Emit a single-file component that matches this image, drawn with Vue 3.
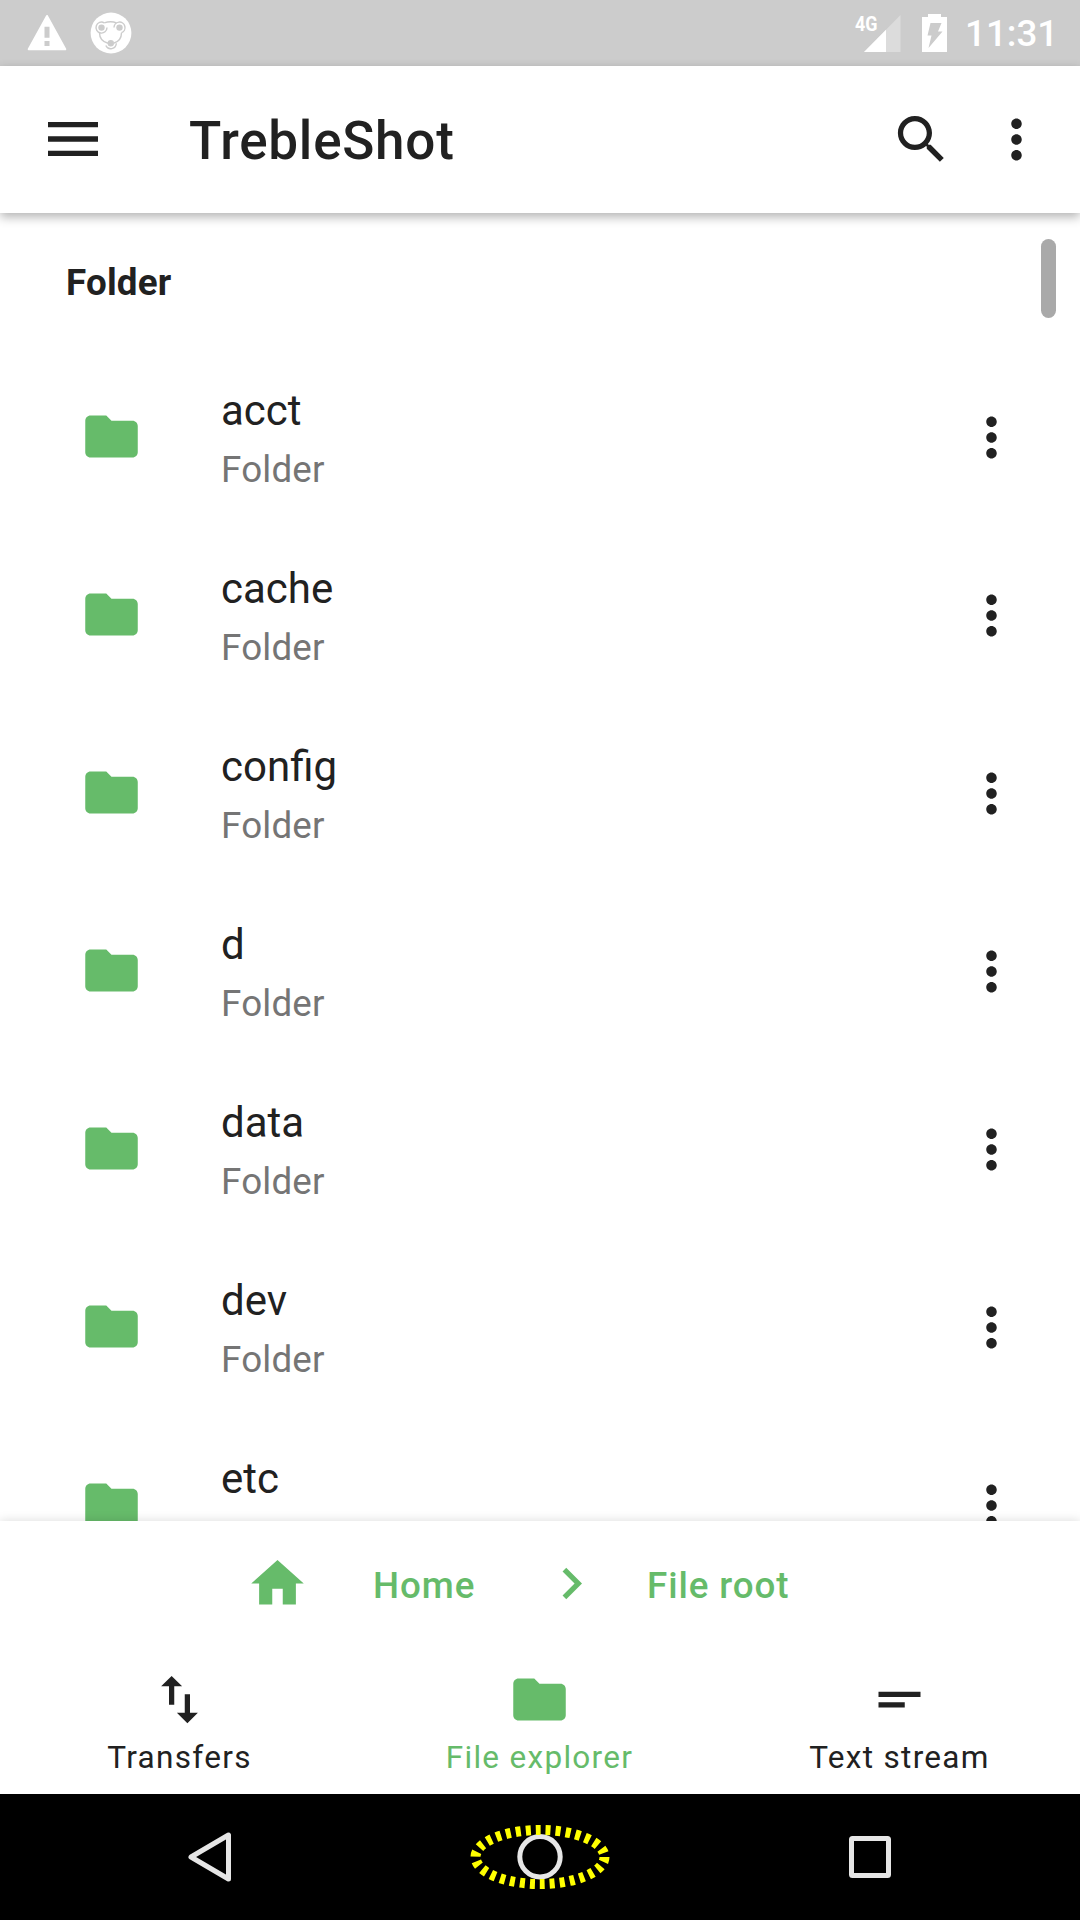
<script setup>
const folders = ['acct', 'cache', 'config', 'd', 'data', 'dev', 'etc']
const folderPath =
  'M10 4H4c-1.1 0-1.99.9-1.99 2L2 18c0 1.1.9 2 2 2h16c1.1 0 2-.9 2-2V8c0-1.1-.9-2-2-2h-8l-2-2z'
const morePath =
  'M12 8c1.1 0 2-.9 2-2s-.9-2-2-2-2 .9-2 2 .9 2 2 2zm0 2c-1.1 0-2 .9-2 2s.9 2 2 2 2-.9 2-2-.9-2-2-2zm0 6c-1.1 0-2 .9-2 2s.9 2 2 2 2-.9 2-2-.9-2-2-2z'
const tabs = [
  {
    label: 'Transfers',
    path: 'M16 17.01V10h-2v7.01h-3L15 21l4-3.99h-3zM9 3L5 6.99h3V14h2V6.99h3L9 3z',
    active: false,
  },
  { label: 'File explorer', path: folderPath, active: true },
  { label: 'Text stream', path: 'M4 9h16v2H4zM4 13h10v2H4z', active: false },
]
</script>

<template>
  <div class="screen">
    <header class="status">
      <svg class="warn" width="40" height="38" viewBox="0 0 40 38">
        <path d="M20 2 L38.3 35.3 H1.7 Z" fill="#fff" stroke="#fff" stroke-width="2" stroke-linejoin="round" />
        <path d="M17.5 12.7h5v11h-5zM17.5 27h5v5h-5z" fill="#ccc" />
      </svg>
      <svg class="app-mark" width="42" height="42" viewBox="0 0 42 42">
        <circle cx="21" cy="21" r="20.4" fill="#fff" />
        <g fill="none" stroke="#ccc" stroke-width="1.4">
          <path d="M14.200 10.800Q21 8.800 26.500 10.800" />
          <path d="M9.500 20.700C9.500 25.800 12 29.600 18 31.200" />
          <path d="M31.500 20.700C31.500 25.800 29.500 29.600 23.500 31.200" />
          <path d="M14.200 10.800A5.500 5.500 0 1 0 17 15.600" />
          <path d="M24 15.600A5.500 5.500 0 1 1 31.500 20.700" />
          <path d="M15.800 33.500A5.500 5.500 0 0 0 26.300 31.300" />
        </g>
        <g fill="#ccc">
          <circle cx="11.500" cy="15.600" r="3.200" />
          <circle cx="29.500" cy="15.600" r="3.200" />
          <circle cx="20.800" cy="31.300" r="3.200" />
        </g>
      </svg>
      <span class="spacer"></span>
      <svg class="signal" width="50" height="44" viewBox="-4 -4 50 44">
        <path d="M9 38L45.500 1V38z" fill="#dcdcdc" />
        <path d="M9 38L31 15.700V38z" fill="#fff" />
        <text x="0" y="17.400" textLength="22.500" lengthAdjust="spacingAndGlyphs">4G</text>
      </svg>
      <svg class="battery" width="25" height="38" viewBox="0 0 25 38">
        <path d="M6 0h13v3h6v35H0V3h6z" fill="#fff" />
        <path d="M8.500 9h11l-3.500 8.500h4.500L6.500 34l3-12.500H5.500z" fill="#ccc" />
      </svg>
      <span class="clock">11:31</span>
    </header>

    <div class="toolbar">
      <svg class="menu" width="50" height="34" viewBox="0 0 50 34">
        <path d="M0 0h50v5.300H0zM0 14.350h50v5.300H0zM0 28.700h50v5.300H0z" />
      </svg>
      <h1>TrebleShot</h1>
      <svg class="icon" viewBox="0 0 24 24">
        <path d="M15.500 14h-.79l-.28-.27C15.410 12.590 16 11.110 16 9.500 16 5.910 13.090 3 9.500 3S3 5.910 3 9.500 5.910 16 9.500 16c1.610 0 3.090-.59 4.230-1.570l.27.28v.79l5 4.990L20.490 19l-4.990-5zm-6 0C7.010 14 5 11.990 5 9.500S7.010 5 9.500 5 14 7.010 14 9.500 11.990 14 9.500 14z" />
      </svg>
      <svg class="icon overflow" viewBox="0 0 24 24"><path :d="morePath" /></svg>
    </div>

    <main class="list">
      <h2>Folder</h2>
      <div v-for="(name, i) in folders" :key="name" class="row">
        <svg class="icon green" viewBox="0 0 24 24"><path :d="folderPath" /></svg>
        <div class="texts">
          <div class="name">{{ name }}</div>
          <div v-if="i < folders.length - 1" class="sub">Folder</div>
        </div>
        <svg class="icon row-more" viewBox="0 0 24 24"><path :d="morePath" /></svg>
      </div>
      <div class="scrollbar"></div>
    </main>

    <section class="panel">
      <div class="crumbs">
        <svg class="icon green" viewBox="0 0 24 24"><path d="M10 20v-6h4v6h5v-8h3L12 3 2 12h3v8z" /></svg>
        <span class="crumb home">Home</span>
        <svg class="icon green" viewBox="0 0 24 24"><path d="M10 6L8.590 7.410 13.170 12l-4.580 4.590L10 18l6-6z" /></svg>
        <span class="crumb root">File root</span>
      </div>
      <nav class="tabs">
        <div v-for="tab in tabs" :key="tab.label" class="tab" :class="{ green: tab.active }">
          <svg class="icon" viewBox="0 0 24 24"><path :d="tab.path" /></svg>
          <span>{{ tab.label }}</span>
        </div>
      </nav>
    </section>

    <footer class="navbar">
      <svg width="1080" height="126" viewBox="0 0 1080 126" fill="none" stroke="#e6e6e6" stroke-width="5" stroke-linejoin="round">
        <path d="M191 63L228.500 41V85z" />
        <circle cx="540" cy="62.700" r="20.200" />
        <rect x="851.500" y="44.500" width="37" height="37" rx="1" />
        <ellipse cx="540" cy="63" rx="64.500" ry="27" stroke="#ff0" stroke-width="10" stroke-dasharray="5 5" />
      </svg>
    </footer>
  </div>
</template>

<style>
body {
  margin: 0;
  background: #fff;
}
</style>

<style scoped>
.screen {
  width: 1080px;
  height: 1920px;
  display: flex;
  flex-direction: column;
  overflow: hidden;
  background: #fff;
  color: #212121;
  font-family: Roboto, "Liberation Sans", sans-serif;
}
svg {
  display: block;
  flex: none;
}
.icon {
  width: 63px;
  height: 63px;
  fill: currentColor;
}
.green {
  color: #66bb6a;
}
.status {
  height: 66px;
  flex: none;
  display: flex;
  align-items: flex-start;
  background: #ccc;
  color: #fff;
}
.warn {
  margin: 14px 0 0 27px;
}
.app-mark {
  margin: 12.400px 0 0 22.500px;
}
.spacer {
  flex: 1;
}
.signal {
  margin: 9.500px 21.500px 0 0;
  overflow: visible;
}
.signal text {
  fill: #fff;
  font: 700 20.500px Roboto, sans-serif;
}
.battery {
  margin-top: 14px;
}
.clock {
  width: 115px;
  margin-left: 18px;
  line-height: 68px;
  font-size: 36.750px;
  font-weight: 500;
}
.toolbar {
  position: relative;
  z-index: 2;
  height: 147px;
  flex: none;
  display: flex;
  align-items: center;
  background: #fff;
  box-shadow: 0 4px 10px rgba(0, 0, 0, 0.3);
}
.menu {
  margin: 0 0 1.500px 48px;
  fill: #212121;
}
h1 {
  flex: 1;
  margin: 3px 0 0 91px;
  font-size: 53px;
  font-weight: 500;
  line-height: 62px;
  letter-spacing: 0.750px;
}
.overflow {
  margin: 0 32px;
}
.list {
  position: relative;
  height: 1308px;
  flex: none;
  overflow: hidden;
}
h2 {
  height: 134px;
  margin: 0 0 0 66px;
  font-size: 36.750px;
  font-weight: 700;
  line-height: 139px;
  letter-spacing: 0.200px;
}
.row {
  height: 178px;
  box-sizing: border-box;
  padding: 0 57px 0 80px;
  display: flex;
  align-items: center;
}
.texts {
  flex: 1;
  height: 118px;
  margin: 9px 0 0 78px;
}
.name {
  font-size: 42px;
  line-height: 58px;
}
.sub {
  font-size: 36.750px;
  line-height: 60px;
  letter-spacing: 0.200px;
  color: #757575;
}
.row-more {
  margin-top: 3px;
}
.scrollbar {
  position: absolute;
  top: 26px;
  right: 24px;
  width: 15px;
  height: 79px;
  border-radius: 7.500px;
  background: #a9a9a9;
}
.panel {
  position: relative;
  z-index: 2;
  height: 273px;
  flex: none;
  background: #fff;
  box-shadow: 0 0 10px rgba(0, 0, 0, 0.15);
}
.crumbs {
  height: 125px;
  display: flex;
  align-items: center;
  padding-left: 246px;
}
.crumb {
  padding-top: 4px;
  font-size: 36.750px;
  font-weight: 500;
  line-height: 44px;
  letter-spacing: 0.900px;
  color: #66bb6a;
}
.home {
  width: 167px;
  margin-left: 64px;
}
.root {
  margin-left: 44px;
}
.tabs {
  height: 148px;
  display: flex;
}
.tab {
  flex: 1;
  display: flex;
  flex-direction: column;
  align-items: center;
  padding: 21.500px 1px 0 0;
}
.tab .icon {
  margin-right: 1px;
}
.tab span {
  margin-top: 8px;
  font-size: 31.500px;
  line-height: 37px;
  letter-spacing: 1.300px;
}
.navbar {
  height: 126px;
  flex: none;
  background: #000;
}
</style>
